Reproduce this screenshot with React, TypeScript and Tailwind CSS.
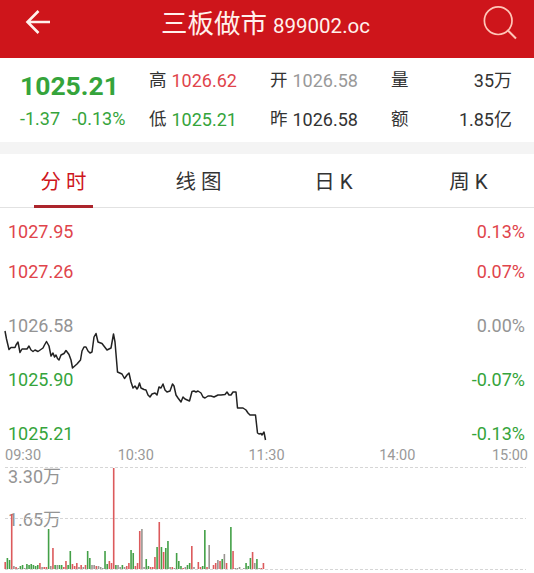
import { ReactNode } from "react";

const RED = "#dc5a5c";
const GREEN = "#43a047";
const GREY = "#999590";

const STATS = [
  { label: "高", value: "1026.62", color: "text-[#e0444b]" },
  { label: "开", value: "1026.58", color: "text-[#999]" },
  { label: "量", value: "35万", color: "text-[#333]" },
  { label: "低", value: "1025.21", color: "text-[#35a43b]" },
  { label: "昨", value: "1026.58", color: "text-[#333]" },
  { label: "额", value: "1.85亿", color: "text-[#333]" },
];

const TABS = ["分 时", "线 图", "日 K", "周 K"];

const LEVELS = [
  { price: "1027.95", percent: "0.13%", style: "mb-5 text-[#e0444b]" },
  { price: "1027.26", percent: "0.07%", style: "mb-[34px] text-[#e0444b]" },
  { price: "1026.58", percent: "0.00%", style: "mb-[34px] text-[#949494]" },
  { price: "1025.90", percent: "-0.07%", style: "mb-[34px] text-[#35a43b]" },
  { price: "1025.21", percent: "-0.13%", style: "text-[#35a43b]" },
];

// x,y pairs inside the 534x256 price panel
const PRICE_LINE =
  "5,123 6.5,131 9,141.5 11,139.5 15,139.5 16,137 18,134 20,144.5 22,141 27,141 29,138 31,142 33,143.5 35,142 38,143.5 43,140 44.5,137 46.5,133.5 49,138 51,148 53,145 54.5,149 56,147 57.5,150.5 59,152 61,147 64,145.5 66,142.5 69,146.5 71,152 72.5,160 77,156 80.5,152 82,143 84,139 86,139 88,143 90,145 92,144 94,129 96,125.5 98,134 102,135.5 107,142 111,140 113.5,126 115,134 117.5,164 122,166 124.5,170.5 127,167 129,165 131,174 133,180 135,178 137,181 138,179.5 139.5,175 141,180 144,181.5 146,182 148,187 150,189 152,186 155,185 157,187 159,179 161,180 163,176 165,182 167,184 170,183 172.5,176 174,178 176,187 178,190 181,194 183,189 185,191 189.5,193 192,183.5 194,183 196,184 198,183 201,185 203,189 205,190 208,188 211,188 214,189 218,187 221,187 225,186.5 227,184 229,187 231,187 233,184 236,184 237.5,200 243,200 246,202 248,205 250,207 255.5,207 257.5,225 259,226 261,225.5 262,227 264,224 265.5,232";

// one bar per minute: r = up, g = down, n = flat
const VOLUME =
  "r7 g11 g9 r55 n3 r2 n1 g3 g4 n1 g5 g4 g5 g4 g3 g4 r6 n2 r2 r2 g40 n3 r21 g4 n4 g4 g4 r2 r8 g4 g18 r5 r3 r6 n2 r4 n2 r4 g18 g11 n4 n4 r3 n3 n2 n1 g18 g5 r8 r6 r101 g4 n4 n2 g4 n2 r3 r6 g19 g16 r3 r6 r38 n40 n2 g10 g3 r2 r2 r12 g22 r47 g22 r17 g21 g28 n2 r2 n1 g16 g8 g3 r1 n2 g4 g6 r23 n2 n0 r7 r2 g3 g39 r2 n24 n0 r4 r6 n9 r8 g10 n15 r6 n0 g42 r18 n1 n1 n2 n0 n1 g6 g3 g11 r17 n6 g10 n1 r1 r6".split(
    " ",
  );

const TIMES = [
  { label: "09:30", style: "" },
  { label: "10:30", style: "text-center" },
  { label: "11:30", style: "text-center" },
  { label: "14:00", style: "text-center" },
  { label: "15:00", style: "text-right" },
];

function Header() {
  return (
    <header className="grid h-[58px] grid-cols-[1fr_auto_1fr] items-center bg-[#ce151b] text-[#fff1ec]">
      <svg className="mb-[14px] ml-[25px]" width="27" height="26" viewBox="0 0 27 26" fill="none">
        <path d="M25 13H2.5M13.5 2 2.5 13l11 11" stroke="currentColor" strokeWidth="2.6" />
      </svg>
      <h1 className="mb-[9px] mr-[3px] flex items-baseline gap-[6px] text-[26.5px] leading-9">
        三板做市 <span className="text-[20.5px]">899002.oc</span>
      </h1>
      <svg className="mb-[15px] mr-[16px] justify-self-end" width="36" height="36" viewBox="0 0 36 36" fill="none">
        <circle cx="16.2" cy="16.7" r="13.8" stroke="#ffc6b8" strokeWidth="1.7" />
        <path d="m25.5 26 8.5 8.5" stroke="#ffc6b8" strokeWidth="2" />
      </svg>
    </header>
  );
}

function Quote() {
  return (
    <section className="flex h-[84px] text-[18px]">
      <div className="w-[149px] pl-5 pt-[12px] text-[#35a43b]">
        <div className="text-[26.5px] font-bold leading-8">1025.21</div>
        <div className="mt-[7px] flex gap-3 leading-5">
          <span>-1.37</span>
          <span>-0.13%</span>
        </div>
      </div>
      <div className="grid h-[81px] flex-1 grid-cols-[121px_121px_121px] pt-[3px]">
        {STATS.map((s, i) => (
          <div
            key={s.label}
            className={`flex items-center gap-[5px] whitespace-nowrap ${i % 3 === 2 ? "justify-between" : ""}`}
          >
            <span className="text-[17.5px] text-[#333]">{s.label}</span>
            <span className={s.color}>{s.value}</span>
          </div>
        ))}
      </div>
    </section>
  );
}

function Tabs() {
  return (
    <nav className="flex h-[54px] justify-between border-b border-[#e2e2e2] pl-[34px] pr-[36px] text-[20.5px]">
      {TABS.map((tab, i) => (
        <div
          key={tab}
          className={`flex h-[54px] w-[59px] items-center justify-center whitespace-nowrap border-b-[3px] pt-[5px] ${
            i === 0 ? "border-[#ac252c] text-[#ce151b]" : "border-transparent text-[#333]"
          }`}
        >
          {tab}
        </div>
      ))}
    </nav>
  );
}

function PriceChart() {
  return (
    <section className="relative h-[256px] pt-[13px]">
      {LEVELS.map((l) => (
        <div key={l.price} className={`flex h-5 items-center justify-between pl-2 pr-[9px] text-[18px] ${l.style}`}>
          <span>{l.price}</span>
          <span>{l.percent}</span>
        </div>
      ))}
      <div className="mt-[2px] grid h-[19px] grid-cols-[1fr_2fr_2fr_2fr_1fr] items-center pl-[5px] pr-[6px] text-[14.5px] text-[#999]">
        {TIMES.map((t) => (
          <span key={t.label} className={t.style}>
            {t.label}
          </span>
        ))}
      </div>
      <svg className="absolute left-0 top-0" width="534" height="256" fill="none">
        <polyline points={PRICE_LINE} stroke="#222" strokeWidth="1.5" strokeLinejoin="round" />
      </svg>
    </section>
  );
}

function VolumeLabel({ children }: { children: ReactNode }) {
  return <div className="h-[43px] pl-2 text-[18px] leading-[26px] text-[#949494]">{children}</div>;
}

function VolumeChart() {
  return (
    <section className="relative h-[109px]">
      <VolumeLabel>3.30万</VolumeLabel>
      <VolumeLabel>1.65万</VolumeLabel>
      <svg className="absolute left-0 top-0" width="534" height="109">
        {[3.5, 54.5, 105.5].map((y) => (
          <line key={y} x1="5" x2="526" y1={y} y2={y} stroke="#d6d6d6" strokeDasharray="3 2" />
        ))}
        {VOLUME.map((bar, i) => {
          const height = Number(bar.slice(1));
          const fill = bar[0] === "r" ? RED : bar[0] === "g" ? GREEN : GREY;
          return <rect key={i} x={4.4 + i * 2.17} y={105 - height} width="1.6" height={height} fill={fill} />;
        })}
      </svg>
    </section>
  );
}

export default function App() {
  return (
    <div className="h-[573px] w-[534px] overflow-hidden bg-white font-['Roboto','Noto_Sans_CJK_SC',sans-serif]">
      <Header />
      <Quote />
      <div className="h-3 bg-[#f4f4f4]" />
      <Tabs />
      <PriceChart />
      <VolumeChart />
    </div>
  );
}
